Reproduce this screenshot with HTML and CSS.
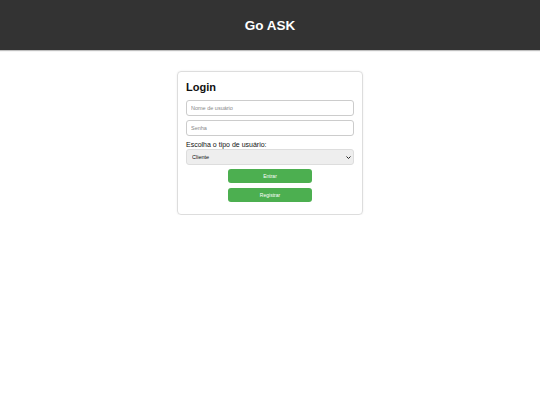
FILE: index.html
```html
<!DOCTYPE html>
<html lang="pt">
<head>
<meta charset="utf-8">
<title>Go ASK</title>
<link rel="stylesheet" href="styles.css">
</head>
<body>
<header class="topbar">
  <h1 class="brand">Go ASK</h1>
</header>
<main class="page">
  <form class="card">
    <h2 class="title">Login</h2>
    <input class="field" type="text" placeholder="Nome de usuário">
    <input class="field" type="password" placeholder="Senha">
    <label class="label" for="tipo">Escolha o tipo de usuário:</label>
    <div class="select-wrap">
      <select class="select" id="tipo">
        <option>Cliente</option>
      </select>
      <svg class="chevron" viewBox="0 0 10 6" width="5" height="3"><path d="M1 1 L5 5 L9 1" fill="none" stroke="#222" stroke-width="2"/></svg>
    </div>
    <div class="actions">
      <button class="btn" type="button">Entrar</button>
      <button class="btn" type="button">Registrar</button>
    </div>
  </form>
</main>
</body>
</html>
```
FILE: styles.css
```css
* { box-sizing: border-box; }
html, body { margin: 0; padding: 0; background: #fff; font-family: "Liberation Sans", Arial, sans-serif; }
.topbar {
  height: 50px;
  background: #333;
  display: flex;
  align-items: center;
  justify-content: center;
  box-shadow: 0 1px 1px rgba(0,0,0,0.25);
}
.brand { margin: 0; color: #fff; font-size: 13.5px; font-weight: bold; }
.page { display: flex; justify-content: center; padding-top: 21px; }
.card {
  width: 186px;
  border: 1px solid #ddd;
  border-radius: 4px;
  padding: 8px 8px 12px;
  display: flex;
  flex-direction: column;
  box-shadow: 0 0 2px rgba(0,0,0,0.08);
}
.title { margin: 0 0 6px; font-size: 11px; font-weight: bold; color: #111; line-height: 14px; }
.field {
  height: 16px;
  border: 1px solid #ccc;
  border-radius: 3px;
  padding: 0 4px;
  font-size: 5.5px;
  font-family: inherit;
  margin-bottom: 4px;
  outline: none;
}
.field::placeholder { color: #888; }
.label { font-size: 7px; color: #111; line-height: 9px; }
.select-wrap { position: relative; margin-bottom: 4px; }
.select {
  width: 100%;
  height: 16px;
  border: 1px solid #ddd;
  border-radius: 3px;
  background: #eee;
  font-size: 5.5px;
  font-family: inherit;
  color: #111;
  padding: 0 5px;
  -webkit-appearance: none;
  appearance: none;
  display: block;
}
.chevron { position: absolute; right: 3px; top: 6.5px; pointer-events: none; }
.actions { display: flex; flex-direction: column; align-items: center; gap: 5px; }
.btn {
  width: 84px;
  height: 14px;
  border: none;
  border-radius: 3px;
  background: #4caf50;
  color: #fff;
  font-size: 5px;
  font-family: inherit;
  padding: 0;
}
```
